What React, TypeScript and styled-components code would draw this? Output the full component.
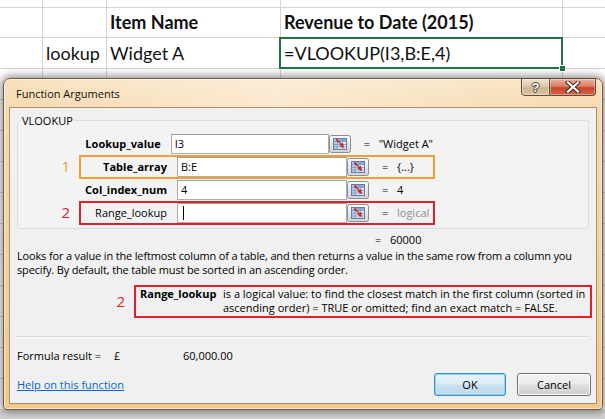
import React from "react";
import styled, { createGlobalStyle } from "styled-components";

const GlobalStyle = createGlobalStyle`
  html, body {
    margin: 0;
    padding: 0;
    background: #fff;
  }
  body {
    width: 605px;
    height: 419px;
    overflow: hidden;
  }
`;

const Stage = styled.div`
  position: relative;
  width: 605px;
  height: 419px;
  overflow: hidden;
  background: #fff;
`;

/* ---------- spreadsheet behind the dialog ---------- */

const Sheet = styled.div`
  display: grid;
  grid-template-columns: 42px 63px 173px 281px 1fr;
  grid-template-rows: 7px 29px 30px;
  grid-auto-rows: 30px;
  gap: 1px;
  height: 100%;
  background: #d4d4d4;
  font-family: Lato, "Liberation Sans", sans-serif;
  font-size: 18px;
  color: #111;
`;

const Cell = styled.div<{ $bold?: boolean; $selected?: boolean }>`
  position: relative;
  display: flex;
  align-items: flex-end;
  padding: 0 3px 4px;
  background: #fff;
  white-space: nowrap;
  font-weight: ${(p) => (p.$bold ? 700 : 400)};

  ${(p) =>
    p.$selected &&
    `
    z-index: 1;
    &::after {
      content: "";
      position: absolute;
      top: -1px;
      left: -2px;
      right: -1px;
      bottom: -1px;
      border: 2px solid #217346;
    }
    &::before {
      content: "";
      position: absolute;
      right: -4px;
      bottom: -4px;
      width: 5px;
      height: 5px;
      background: #217346;
      border: 1px solid #fff;
      z-index: 2;
    }
  `}
`;

/* ---------- dialog window ---------- */

const Window = styled.div`
  position: absolute;
  left: 3px;
  top: 78px;
  width: 600px;
  height: 332px;
  box-sizing: border-box;
  display: flex;
  flex-direction: column;
  padding: 0 5px 5px;
  border: 1px solid #6f5b3f;
  border-radius: 7px 7px 4px 4px;
  background: linear-gradient(to bottom, #f9e2c0 0, #f7d9ae 30px, #f2c88b 100%);
  box-shadow: 0 0 9px 2px rgba(0, 0, 0, 0.45), inset 0 0 0 1px rgba(255, 255, 255, 0.55);
  font-family: "Open Sans", "Liberation Sans", sans-serif;
  font-size: 11px;
  color: #000;
`;

const TitleBar = styled.div`
  display: flex;
  align-items: center;
  justify-content: space-between;
  height: 28px;
  padding-left: 7px;
  background: linear-gradient(to right, rgba(255, 255, 255, 0) 0, rgba(255, 255, 255, 0.4) 45%, rgba(255, 255, 255, 0) 100%);
`;

const Title = styled.span`
  font-size: 11px;
  color: #111;
`;

const CaptionButtons = styled.div`
  align-self: flex-start;
  display: flex;
  margin-top: -1px;
  margin-right: 1px;
`;

const CaptionButton = styled.div<{ $close?: boolean }>`
  display: flex;
  align-items: center;
  justify-content: center;
  width: ${(p) => (p.$close ? "46px" : "29px")};
  height: 18px;
  box-sizing: border-box;
  border: 1px solid #5e4c38;
  border-left-width: ${(p) => (p.$close ? "0" : "1px")};
  border-radius: ${(p) => (p.$close ? "0 0 4px 0" : "0 0 0 4px")};
  background: ${(p) =>
    p.$close
      ? "linear-gradient(to bottom, #eab0a0 0, #dc8068 45%, #c5452a 55%, #d4684a 100%)"
      : "linear-gradient(to bottom, #efe2cf 0, #e0cbab 45%, #ceb591 55%, #dcc5a2 100%)"};
  box-shadow: inset 0 0 0 1px rgba(255, 255, 255, 0.35);
`;

const HelpGlyph = styled.span`
  font-family: "Liberation Sans", sans-serif;
  font-weight: 700;
  font-size: 13px;
  line-height: 1;
  color: #fff;
  text-shadow: 1px 0 0 #4a3f33, -1px 0 0 #4a3f33, 0 1px 0 #4a3f33, 0 -1px 0 #4a3f33;
`;

const Content = styled.div`
  flex: 1;
  display: flex;
  flex-direction: column;
  padding: 5px 7px 0;
  border: 1px solid #a7916f;
  background: #f0f0f0;
`;

const Group = styled.fieldset`
  margin: 0;
  padding: 0 0 4px;
  border: 1px solid #d8dde2;
  border-radius: 3px;
  background: #f3f3f3;
`;

const Legend = styled.legend`
  margin-left: 2px;
  padding: 0 2px;
  line-height: 15px;
`;

const Rows = styled.div`
  display: flex;
  flex-direction: column;
  padding-top: 4px;
`;

const Row = styled.div`
  display: flex;
  align-items: center;
  height: 23px;
`;

const Marker = styled.span<{ $color?: string; $w?: number }>`
  flex: none;
  width: ${(p) => p.$w ?? 52}px;
  padding-right: 9px;
  text-align: right;
  font-size: 15px;
  line-height: 1;
  color: ${(p) => p.$color || "transparent"};
`;

const Highlight = styled.div<{ $color?: string }>`
  display: flex;
  align-items: center;
  flex: none;
  width: 356px;
  height: 24px;
  box-sizing: border-box;
  border: 2px solid ${(p) => p.$color || "transparent"};
`;

const ArgLabel = styled.span<{ $bold?: boolean }>`
  width: 86px;
  margin-right: 10px;
  text-align: right;
  white-space: nowrap;
  font-weight: ${(p) => (p.$bold ? 700 : 400)};
`;

const TextBox = styled.div`
  display: flex;
  align-items: center;
  width: 170px;
  height: 20px;
  box-sizing: border-box;
  padding-left: 3px;
  border: 1px solid #abadb3;
  border-top-color: #9ea1a8;
  background: #fff;
  white-space: nowrap;
`;

const Caret = styled.span`
  width: 1px;
  height: 14px;
  margin-left: 2px;
  background: #000;
`;

const RefButton = styled.div`
  display: flex;
  width: 22px;
  height: 18px;
`;

const Equals = styled.span`
  margin-left: 13px;
  width: 6px;
`;

const ArgValue = styled.span<{ $muted?: boolean }>`
  margin-left: 9px;
  white-space: nowrap;
  color: ${(p) => (p.$muted ? "#8d8d8d" : "#000")};
`;

const ResultLine = styled.div`
  display: flex;
  height: 14px;
  line-height: 14px;
  margin-top: 4px;
  padding-left: 345px;
`;

const Description = styled.p`
  margin: 2px 0 0;
  line-height: 14px;
  letter-spacing: -0.16px;
`;

const ArgHelpRow = styled.div`
  display: flex;
  align-items: center;
  margin: 8px -3px 0 0;
`;

const ArgHelpBox = styled.div`
  flex: 1;
  display: flex;
  padding: 0 4px 1px;
  border: 2px solid #e0202b;
  line-height: 14px;
`;

const ArgHelpName = styled.span`
  flex: none;
  width: 83px;
  font-weight: 700;
`;

const Separator = styled.div`
  height: 1px;
  margin: 18px -1px 0;
  background: #d9d9d9;
  box-shadow: 0 1px 0 #fbfbfb;
`;

const FormulaResult = styled.div`
  display: flex;
  height: 14px;
  line-height: 14px;
  margin-top: 12px;
`;

const ResultPart = styled.span<{ $w: number }>`
  width: ${(p) => p.$w}px;
  white-space: nowrap;
`;

const Footer = styled.div`
  display: flex;
  align-items: center;
  margin-top: 10px;
  margin-right: -2px;
`;

const HelpLink = styled.a`
  flex: 1;
  color: #0066cc;
  text-decoration: underline;
  cursor: pointer;
`;

const DialogButton = styled.button<{ $default?: boolean }>`
  height: 23px;
  margin-left: ${(p) => (p.$default ? "0" : "11px")};
  width: ${(p) => (p.$default ? "72px" : "74px")};
  padding: 0;
  border: 1px solid ${(p) => (p.$default ? "#3c8fc4" : "#707070")};
  border-radius: 3px;
  font-family: inherit;
  font-size: 11px;
  color: #000;
  background: ${(p) =>
    p.$default
      ? "linear-gradient(to bottom, #eaf4fa 0, #dcecf6 45%, #c8e0ef 55%, #bcd9ec 100%)"
      : "linear-gradient(to bottom, #f2f2f2 0, #ebebeb 45%, #dddddd 55%, #cfcfcf 100%)"};
  box-shadow: inset 0 0 0 1px ${(p) => (p.$default ? "#8ed0f0" : "rgba(255,255,255,0.8)")};
`;

/* ---------- small drawings ---------- */

const CollapseIcon = () => (
  <svg width="22" height="18" viewBox="0 0 22 18">
    <defs>
      <linearGradient id="rb" x1="0" y1="0" x2="0" y2="1">
        <stop offset="0" stopColor="#fbfbfb" />
        <stop offset="1" stopColor="#d3d3d3" />
      </linearGradient>
    </defs>
    <rect x="0.5" y="0.5" width="21" height="17" rx="2" fill="url(#rb)" stroke="#8b8d90" />
    <rect x="4.5" y="3.5" width="13" height="11" fill="#dfe8f4" stroke="#5f7ca4" />
    <rect x="5" y="4" width="12" height="2.5" fill="#8faacd" />
    <rect x="5" y="4" width="3.5" height="10" fill="#b7c8df" />
    <path d="M4.5 6.5h13M4.5 9.5h13M4.5 12h13M8.5 3.5v11M13 3.5v11" stroke="#7d97bb" strokeWidth="0.8" />
    <path d="M7 5.2 L12 9.4 L10.6 10.6 L14.6 12.6 L13.8 8.2 L12.7 9.3 L7.9 4.3 Z" fill="#e0242a" stroke="#9e1418" strokeWidth="0.5" />
  </svg>
);

const CloseGlyph = () => (
  <svg width="18" height="12" viewBox="0 0 18 12">
    <path d="M4 1.5 L14 10.5 M14 1.5 L4 10.5" stroke="#4a2a20" strokeWidth="4.2" strokeLinecap="square" />
    <path d="M4 1.5 L14 10.5 M14 1.5 L4 10.5" stroke="#fff" strokeWidth="2.2" strokeLinecap="square" />
  </svg>
);

type Arg = {
  label: string;
  value: React.ReactNode;
  result: string;
  bold?: boolean;
  muted?: boolean;
  marker?: string;
  color?: string;
};

const ORANGE = "#f0a030";
const RED = "#e0202b";

const args: Arg[] = [
  { label: "Lookup_value", value: "I3", result: '"Widget A"', bold: true },
  { label: "Table_array", value: "B:E", result: "{...}", bold: true, marker: "1", color: ORANGE },
  { label: "Col_index_num", value: "4", result: "4", bold: true },
  { label: "Range_lookup", value: <Caret />, result: "logical", muted: true, marker: "2", color: RED },
];

const sheetRows: string[][] = [
  ["", "", "", "", ""],
  ["", "", "Item Name", "Revenue to Date (2015)", ""],
  ["", "lookup", "Widget A", "=VLOOKUP(I3,B:E,4)", ""],
  ...Array.from({ length: 11 }, () => ["", "", "", "", ""]),
];

export default function App() {
  return (
    <Stage>
      <GlobalStyle />
      <Sheet>
        {sheetRows.map((row, r) =>
          row.map((text, c) => (
            <Cell key={`${r}-${c}`} $bold={r === 1} $selected={r === 2 && c === 3}>
              {text}
            </Cell>
          ))
        )}
      </Sheet>

      <Window>
        <TitleBar>
          <Title>Function Arguments</Title>
          <CaptionButtons>
            <CaptionButton>
              <HelpGlyph>?</HelpGlyph>
            </CaptionButton>
            <CaptionButton $close>
              <CloseGlyph />
            </CaptionButton>
          </CaptionButtons>
        </TitleBar>

        <Content>
          <Group>
            <Legend>VLOOKUP</Legend>
            <Rows>
              {args.map((a) => (
                <Row key={a.label}>
                  <Marker $color={a.color}>{a.marker}</Marker>
                  <Highlight $color={a.color}>
                    <ArgLabel $bold={a.bold}>{a.label}</ArgLabel>
                    <TextBox>{a.value}</TextBox>
                    <RefButton>
                      <CollapseIcon />
                    </RefButton>
                    <Equals>=</Equals>
                    <ArgValue $muted={a.muted}>{a.result}</ArgValue>
                  </Highlight>
                </Row>
              ))}
            </Rows>
          </Group>

          <ResultLine>
            <Equals>=</Equals>
            <ArgValue>60000</ArgValue>
          </ResultLine>

          <Description>
            Looks for a value in the leftmost column of a table, and then returns a value in the same row from a column you
            specify. By default, the table must be sorted in an ascending order.
          </Description>

          <ArgHelpRow>
            <Marker $color={RED} $w={108}>2</Marker>
            <ArgHelpBox>
              <ArgHelpName>Range_lookup</ArgHelpName>
              <span>
                is a logical value: to find the closest match in the first column (sorted in ascending order) = TRUE or
                omitted; find an exact match = FALSE.
              </span>
            </ArgHelpBox>
          </ArgHelpRow>

          <Separator />

          <FormulaResult>
            <ResultPart $w={97}>Formula result =</ResultPart>
            <ResultPart $w={69}>£</ResultPart>
            <ResultPart $w={100}>60,000.00</ResultPart>
          </FormulaResult>

          <Footer>
            <HelpLink>Help on this function</HelpLink>
            <DialogButton $default>OK</DialogButton>
            <DialogButton>Cancel</DialogButton>
          </Footer>
        </Content>
      </Window>
    </Stage>
  );
}
